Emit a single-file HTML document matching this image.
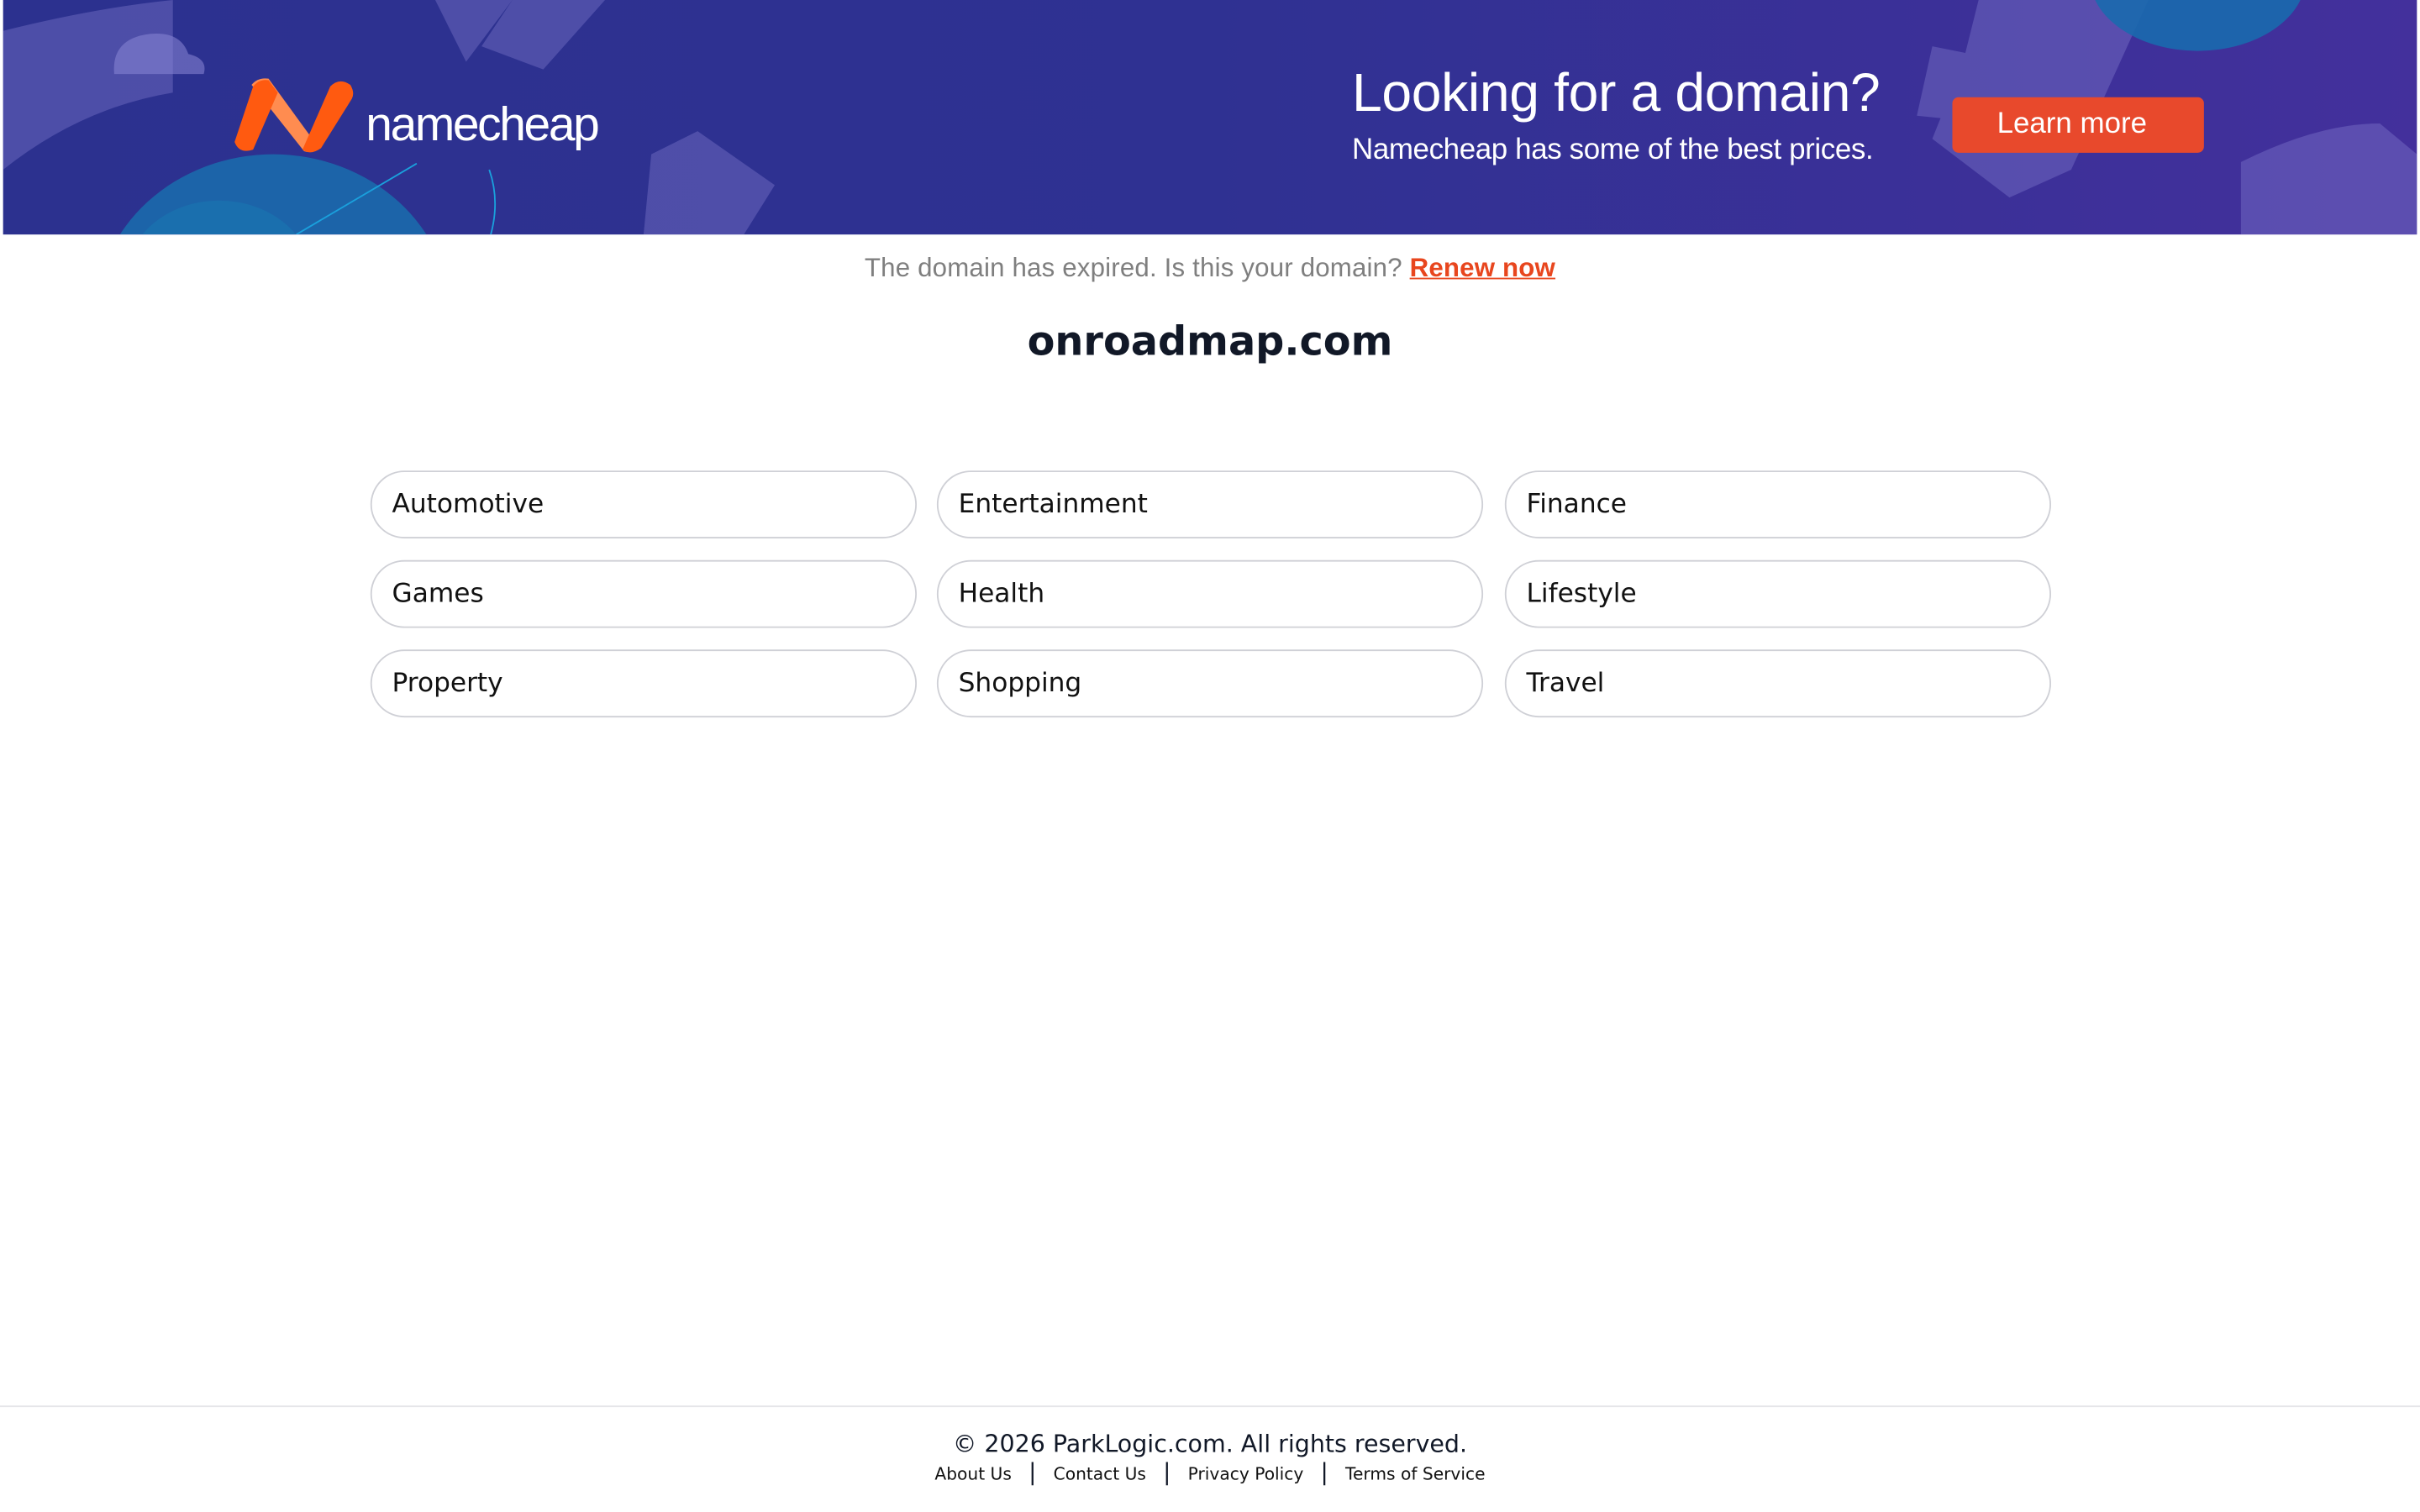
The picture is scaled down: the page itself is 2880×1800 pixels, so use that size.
<!DOCTYPE html>
<html><head><meta charset="utf-8"><style>
html,body{margin:0;padding:0;background:#fff;overflow:hidden;width:2880px;height:1800px}
#w{position:absolute;left:0;top:0;width:1568px;height:980px;transform:scale(1.836735);transform-origin:0 0;font-family:"DejaVu Sans",sans-serif}
.ban{position:absolute;left:2px;top:0;width:1564px;height:152px;background:linear-gradient(90deg,#2c318f 0%,#2f3192 50%,#43309c 100%);overflow:hidden}
.a{position:absolute;font-family:"Liberation Sans",Arial,sans-serif;color:#fff}
.box{position:absolute;height:42px;border:1px solid #cfd0d6;border-radius:22px;font-size:17px;line-height:42px;padding-left:13px;box-sizing:content-box;color:#111;width:339px}
.ft a{color:#111;text-decoration:none}
.ft span{font-size:15px;margin:0 11px}
</style></head><body><div id="w">
<div class="ban">
<svg width="1564" height="152" style="position:absolute;left:0;top:0">
<g fill="#8b86d6" opacity="0.35">
<path d="M0 20 Q60 5 110 0 L110 60 Q50 70 0 110Z"/>
<path d="M280 0 L330 0 L300 40 Z"/>
<path d="M330 0 L390 0 L350 45 L310 30Z"/>
<path d="M420 100 L450 85 L500 120 L480 152 L415 152Z"/>
<path d="M1250 30 L1300 40 L1290 80 L1240 75Z"/>
<path d="M1280 0 L1390 0 L1340 110 L1300 128 L1250 90 L1270 40Z"/>
<path d="M1450 105 Q1500 80 1540 80 L1564 100 L1564 152 L1450 152Z"/>
</g>
<path d="M72 48 Q70 25 95 22 Q115 20 120 35 Q133 38 130 48Z" fill="#8b86d6" opacity="0.55"/>
<ellipse cx="175" cy="205" rx="115" ry="105" fill="#1b6aac" opacity="0.9"/>
<ellipse cx="140" cy="180" rx="60" ry="50" fill="#1a6fae"/>
<ellipse cx="1422" cy="-15" rx="70" ry="48" fill="#1a6aae" opacity="0.9"/>
<path d="M190 152 L268 106" stroke="#1aa0dc" stroke-width="1"/>
<path d="M315 110 Q322 130 316 152" stroke="#1aa0dc" stroke-width="1" fill="none"/>
<path d="M161 55 Q165 50 172 51 L204 95 Q200 100 195 98 Z" fill="#ff8c50"/>
<path d="M150 92 L162 56 Q166 51 172 52 L178 60 L162 97 Q153 100 150 92Z" fill="#ff5a10"/>
<path d="M194 97 L212 56 Q218 50 225 55 Q228 60 226 64 L206 96 Q199 101 194 97Z" fill="#ff5a10"/>
</svg>
<div class="a" style="left:235px;top:63px;font-size:31px;letter-spacing:-1.3px">namecheap</div>
<div class="a" style="left:874px;top:41px;font-size:35px;letter-spacing:-0.2px">Looking for a domain?</div>
<div class="a" style="left:874px;top:87px;font-size:19px;letter-spacing:-0.2px">Namecheap has some of the best prices.</div>
<div class="a" style="left:1263px;top:63px;width:163px;height:36px;background:#e8492c;border-radius:4px;text-align:center;line-height:36px;font-size:19px;text-indent:-8px">Learn more</div>
</div>
<div style="position:absolute;left:0;width:1568px;top:164px;text-align:center;font-family:'Liberation Sans',Arial,sans-serif;font-size:17px;color:#7f7f7f;letter-spacing:0.1px">The domain has expired. Is this your domain? <b style="color:#e8461e;text-decoration:underline">Renew now</b></div>
<div style="position:absolute;left:0;width:1568px;top:207px;text-align:center;font-size:26px;font-weight:bold;color:#111827">onroadmap.com</div>
<div class="box" style="left:240px;top:305px">Automotive</div>
<div class="box" style="left:607px;top:305px">Entertainment</div>
<div class="box" style="left:975px;top:305px">Finance</div>
<div class="box" style="left:240px;top:363px">Games</div>
<div class="box" style="left:607px;top:363px">Health</div>
<div class="box" style="left:975px;top:363px">Lifestyle</div>
<div class="box" style="left:240px;top:421px">Property</div>
<div class="box" style="left:607px;top:421px">Shopping</div>
<div class="box" style="left:975px;top:421px">Travel</div>
<div style="position:absolute;left:0;top:911px;width:1568px;height:1px;background:#e5e5e8"></div>
<div style="position:absolute;left:0;width:1568px;top:927px;text-align:center;font-size:15.5px;color:#111827">© 2026 ParkLogic.com. All rights reserved.</div>
<div class="ft" style="position:absolute;left:0;width:1568px;top:945px;text-align:center;font-size:11px;color:#111827"><a>About Us</a><span>|</span><a>Contact Us</a><span>|</span><a>Privacy Policy</a><span>|</span><a>Terms of Service</a></div>
</div></body></html>
